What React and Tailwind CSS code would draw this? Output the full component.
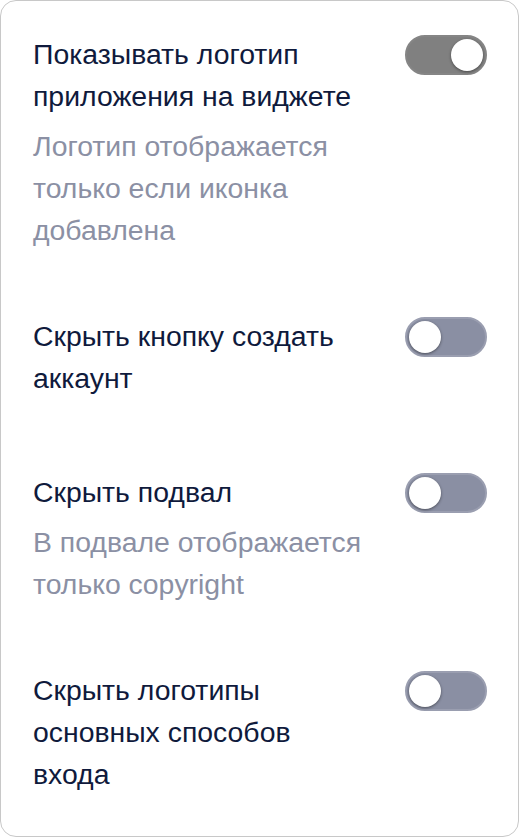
import { useState } from 'react';

const items = [
  {
    title: 'Показывать логотип приложения на виджете',
    desc: 'Логотип отображается только если иконка добавлена',
    on: true,
  },
  { title: 'Скрыть кнопку создать аккаунт', desc: '', on: false },
  { title: 'Скрыть подвал', desc: 'В подвале отображается только copyright', on: false },
  { title: 'Скрыть логотипы основных способов входа', desc: '', on: false },
];

function Toggle({ on, onChange }) {
  return (
    <button
      type="button"
      onClick={onChange}
      className={`relative shrink-0 mt-[2px] w-[82px] h-[40px] rounded-full border-2 ${
        on ? 'bg-[#808080] border-[#858585]' : 'bg-[#8a8fa3] border-[#9a9eb0]'
      }`}
    >
      <span
        className={`absolute top-[2px] w-[32px] h-[32px] rounded-full bg-white shadow-[0_1px_3px_rgba(0,0,0,0.45)] ${
          on ? 'right-[2px]' : 'left-[2px]'
        }`}
      />
    </button>
  );
}

export default function App() {
  const [state, setState] = useState(items.map((i) => i.on));

  return (
    <div className="w-[519px] h-[838px] bg-white" style={{ fontFamily: '"Liberation Sans", Arial, sans-serif' }}>
      <div className="w-[519px] h-[837px] border border-[#c8c8c8] rounded-[16px] pl-[32px] pr-[31px] pt-[32px] flex flex-col gap-[64px]">
        {items.map((item, i) => (
          <div key={i} className="flex items-start justify-between">
            <div className="w-[336px] text-[28.4px] leading-[42px]">
              <div className="text-[#0f1a3c]">{item.title}</div>
              <div className="mt-2 text-[#8b90a4]">{item.desc}</div>
            </div>
            <Toggle
              on={state[i]}
              onChange={() => setState((s) => s.map((v, j) => (j === i ? !v : v)))}
            />
          </div>
        ))}
      </div>
    </div>
  );
}
